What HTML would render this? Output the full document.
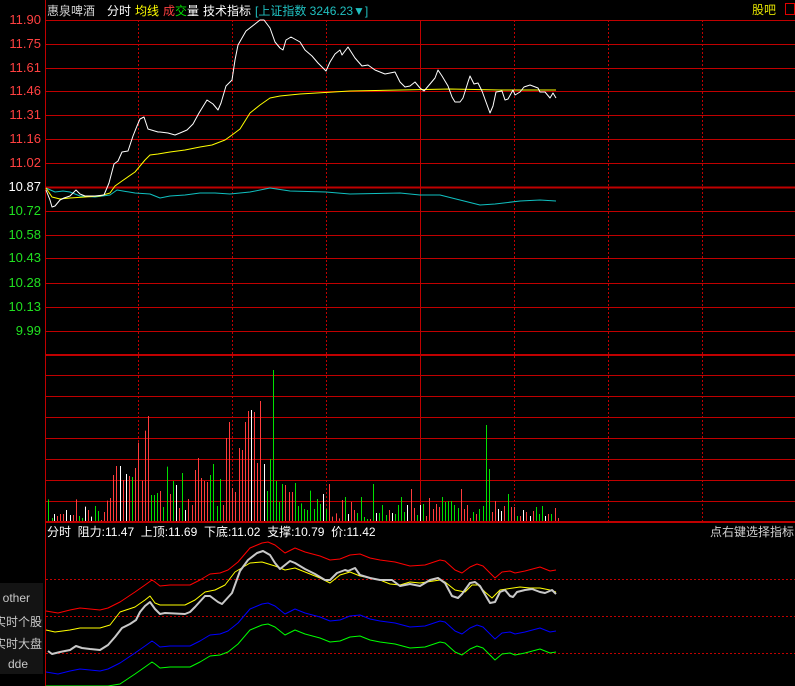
<!DOCTYPE html>
<html><head><meta charset="utf-8">
<style>
html,body{margin:0;padding:0;background:#000;width:795px;height:686px;overflow:hidden}
body{position:relative;font-family:"Liberation Sans","Noto Sans CJK SC",sans-serif}
.t{position:absolute;font-size:12px;line-height:14px;white-space:nowrap}
.ax{position:absolute;right:754px;font-size:13px;line-height:14px;text-align:right}
#side{position:absolute;left:0;top:583px;width:43px;height:91px;background:#141414;overflow:hidden}
#side div{position:absolute;right:14px;font-size:12px;color:#c8c8c8;white-space:nowrap}
svg{position:absolute;left:0;top:0}
</style></head><body>
<svg id="s" width="795" height="686" xmlns="http://www.w3.org/2000/svg"></svg>

<div class="t" style="left:47px;top:4px;color:#d0d0d0">惠泉啤酒</div>
<div class="t" style="left:107px;top:4px;color:#fff">分时</div>
<div class="t" style="left:135px;top:4px;color:#ffff00">均线</div>
<div class="t" style="left:163px;top:4px"><span style="color:#ff4040">成</span><span style="color:#00e000">交</span><span style="color:#fff">量</span></div>
<div class="t" style="left:203px;top:4px;color:#fff">技术指标</div>
<div class="t" style="left:255px;top:4px;color:#20c0c0">[上证指数 3246.23▼]</div>
<div class="t" style="left:752px;top:3px;color:#e0e000">股吧</div>
<div style="position:absolute;left:785px;top:3px;width:8px;height:10px;border:1px solid #e00000"></div>

<div class="ax" style="top:13px;color:#ff4040">11.90</div>
<div class="ax" style="top:37px;color:#ff4040">11.75</div>
<div class="ax" style="top:61px;color:#ff4040">11.61</div>
<div class="ax" style="top:84px;color:#ff4040">11.46</div>
<div class="ax" style="top:108px;color:#ff4040">11.31</div>
<div class="ax" style="top:132px;color:#ff4040">11.16</div>
<div class="ax" style="top:156px;color:#ff4040">11.02</div>
<div class="ax" style="top:180px;color:#fff">10.87</div>
<div class="ax" style="top:204px;color:#20e020">10.72</div>
<div class="ax" style="top:228px;color:#20e020">10.58</div>
<div class="ax" style="top:251px;color:#20e020">10.43</div>
<div class="ax" style="top:276px;color:#20e020">10.28</div>
<div class="ax" style="top:300px;color:#20e020">10.13</div>
<div class="ax" style="top:324px;color:#20e020">9.99</div>

<div class="t" style="left:47px;top:525px;color:#fff">分时 &nbsp;阻力:11.47 &nbsp;上顶:11.69 &nbsp;下底:11.02 &nbsp;支撑:10.79 &nbsp;价:11.42</div>
<div class="t" style="right:1px;top:525px;color:#d0d0d0">点右键选择指标</div>

<div id="side">
<div style="top:8px;right:13px">other</div>
<div style="top:30px;right:1px">实时个股</div>
<div style="top:52px;right:1px">实时大盘</div>
<div style="top:74px;right:15px">dde</div>
</div>

<script>
var s=document.getElementById('s'),h='';
function L(x1,y1,x2,y2,c,w,d){h+='<line x1="'+x1+'" y1="'+y1+'" x2="'+x2+'" y2="'+y2+'" stroke="'+c+'" stroke-width="'+(w||1)+'"'+(d?' stroke-dasharray="'+d+'"':'')+'/>';}
var R='#c00000';
[20,44,68,91,115,139,163,211,235,258,283,307,331].forEach(function(y){L(45,y+.5,795,y+.5,R,1)});
L(45,187.5,795,187.5,R,2);
L(45,355,795,355,R,2);
[375,396,417,438,459,480,501].forEach(function(y){L(45,y+.5,795,y+.5,R,1)});
L(45,522,795,522,R,2);
[138,232,326,514,608,702].forEach(function(x){L(x+.5,20,x+.5,522,R,1,'2,2')});
L(420.5,20,420.5,522,R,1);
L(45.5,0,45.5,686,R,1);
[579,616,653].forEach(function(y){L(46,y+.5,795,y+.5,R,1,'2,2')});
function P(a,c,w){var p=[];for(var i=0;i<a.length;i+=2)p.push(a[i]+','+a[i+1]);h+='<polyline fill="none" stroke="'+c+'" stroke-width="'+(w||1)+'" stroke-linejoin="round" points="'+p.join(' ')+'"/>';}
var C={r:'#ff3c3c',g:'#00e000',w:'#fff'};
var v1=[25,'g',418,35,'g',474,43,'w',462,52,'r',468,61,'r',462,70,'r',462,79,'w',450,89,'w',465,100,'r',465,109,'r',418,118,'g',468,127,'g',474,136,'w',440,145,'r',450,154,'w',470,166,'g',438,175,'g',453,184,'r',480,193,'r',456,202,'r',422,211,'r',414,220,'r',345,229,'r',318,241,'w',318,250,'r',360,259,'w',342,268,'r',348,277,'g',351,286,'r',324,295,'r',248,307,'r',362,316,'r',212,325,'r',168,334,'g',405,343,'g',405,352,'g',399,361,'r',393,370,'g',441,382,'g',320,391,'r',402,400,'g',363,409,'w',375,418,'r',444,427,'g',339,436,'w',450,445,'r',417,457,'r',435,466,'r',330,475,'r',294,484,'r',354,493,'r',363,502,'r',366,511,'g',345,520,'g',312,532,'g',438,541,'g',357,550,'r',435,559,'r',234,568,'r',186,577,'r',384,586,'r',396,598,'r',264,607,'r',270,616,'r',186,625,'r',153,634,'w',150,643,'r',156,652,'r',309,661,'r',123,673,'w',312,682,'g',393,691,'g',297,700,'g',30,709,'g',363,718,'g',426,727,'g',372,736,'r',375,748,'r',396,757,'r',396,766,'g',369,775,'g',438];
for(var i=0;i<v1.length;i+=3){var x=Math.round(40+v1[i]/3)+.5;L(x,360+v1[i+2]/3,x,521,C[v1[i+1]],1);}
var v2=[4,'g',310,13,'g',327,22,'g',330,31,'g',272,43,'g',327,52,'g',297,61,'g',312,70,'w',282,79,'g',327,88,'r',252,97,'r',350,109,'r',340,118,'r',355,127,'r',300,136,'g',291,145,'w',342,154,'r',306,163,'r',330,172,'g',339,184,'g',291,193,'g',351,202,'g',357,211,'r',357,220,'g',252,229,'w',339,238,'g',339,247,'g',315,259,'g',345,268,'r',330,277,'w',339,286,'g',342,295,'g',315,304,'g',291,313,'g',336,322,'w',315,334,'r',267,343,'r',324,352,'g',345,361,'w',315,370,'g',312,379,'r',348,388,'r',294,400,'r',327,409,'r',312,418,'r',321,427,'g',291,436,'g',306,445,'g',303,454,'g',303,463,'g',315,475,'g',324,484,'r',267,493,'r',327,502,'r',315,511,'r',354,520,'g',336,529,'r',342,538,'g',327,550,'g',318,559,'g',75,568,'g',207,577,'r',336,586,'r',303,595,'w',327,604,'w',333,613,'r',318,625,'g',282,634,'r',321,643,'r',321,652,'g',348,661,'r',348,670,'w',330,679,'r',336,691,'w',348,700,'r',333,709,'g',321,718,'g',342,727,'g',318,736,'w',348,745,'r',342,754,'g',342,766,'r',324,775,'r',354];
for(var i=0;i<v2.length;i+=3){var x=Math.round(300+v2[i]/3)+.5;L(x,400+v2[i+2]/3,x,521,C[v2[i+1]],1);}
P([46,188,55,192,63,191,70,192,80,196,95,197,110,195,117,190,135,193,150,194,160,198,170,196,185,195,200,193,215,193,230,194,250,192,270,188,290,191,326,192,350,194,400,193,420,195,440,195,460,200,480,205,495,204,520,201,540,200,556,201],'#10c0c0');
P([46,188,52,197,60,199,70,198,100,196,110,193,115,186,122,181,135,172,145,160,150,155,158,154,170,152,185,150,200,147,212,145,225,140,232,135,240,129,250,113,260,105,270,98,280,96,300,94,350,91,400,90,450,89,500,90,556,90],'#ffff00');
P([46,190,50,200,52,207,55,206,60,200,64,198,70,196,76,190,80,194,85,196,95,196,104,195,109,183,114,164,118,161,122,152,128,151,133,136,137,126,140,119,144,117,148,129,158,132,160,132,168,133,175,135,180,133,187,130,193,124,199,113,207,100,213,104,218,110,221,103,226,86,232,80,235,60,238,45,246,31,255,24,260,20,264,20,270,28,275,42,280,48,283,50,286,40,291,37,300,42,305,50,312,56,318,63,322,67,326,71,330,62,335,54,340,50,342,55,348,47,355,58,362,66,368,65,375,70,385,74,395,72,400,82,405,87,410,86,415,82,420,88,424,91,430,84,435,78,438,70,442,76,448,86,452,97,455,102,460,102,463,98,468,82,470,76,474,84,478,83,482,91,486,102,490,113,493,106,496,92,502,91,505,100,508,99,513,90,515,95,520,92,524,87,530,85,538,88,540,92,545,92,550,98,553,93,556,98],'#fff');
var red=[46,611,58,613,70,610,80,608,100,610,108,608,120,602,135,592,145,585,152,580,155,582,160,586,170,585,190,585,200,580,210,574,220,573,228,570,238,562,250,548,262,543,268,542,275,545,285,553,295,548,305,552,320,556,330,560,340,559,350,555,360,554,370,558,380,560,395,562,410,566,425,565,440,560,445,561,455,570,462,573,470,567,477,564,483,566,490,573,495,578,502,572,510,571,515,573,525,571,540,567,550,571,556,570];
function sh(a,d){return a.map(function(v,i){return i%2?Math.min(v+d,686):v})}
P(red,'#ff0000');
P(sh(red,61),'#0000ff');
P(sh(red,82),'#00ff00');
P([46,630,55,632,70,630,80,628,100,628,110,625,120,612,135,607,145,600,150,596,155,603,160,605,185,605,195,600,205,592,215,590,225,585,235,572,250,563,262,562,275,566,285,570,295,568,305,572,320,578,330,583,340,575,350,572,360,576,370,578,380,580,390,584,400,585,410,582,420,583,440,580,445,582,455,590,465,592,472,585,478,585,485,592,492,598,500,590,520,587,530,588,540,588,550,590,556,592],'#ffff00');
P([48,651,52,654,60,652,70,650,76,646,82,648,90,649,100,650,108,645,115,637,122,628,130,624,136,620,140,612,145,606,150,602,155,609,160,614,165,613,185,614,190,612,195,607,205,596,210,596,218,602,222,604,232,593,240,571,248,560,257,553,263,551,270,555,275,563,280,569,285,565,290,561,295,563,305,569,315,574,325,580,330,580,337,573,345,570,348,571,355,568,360,575,370,578,380,580,392,580,400,586,410,584,420,586,430,580,438,578,445,583,452,596,458,598,462,594,470,583,475,582,480,586,487,598,490,603,495,602,500,592,505,590,510,596,513,597,517,592,525,590,532,589,540,592,545,593,552,590,556,594],'#c8c8c8',2);
s.innerHTML=h;
</script>
</body></html>
